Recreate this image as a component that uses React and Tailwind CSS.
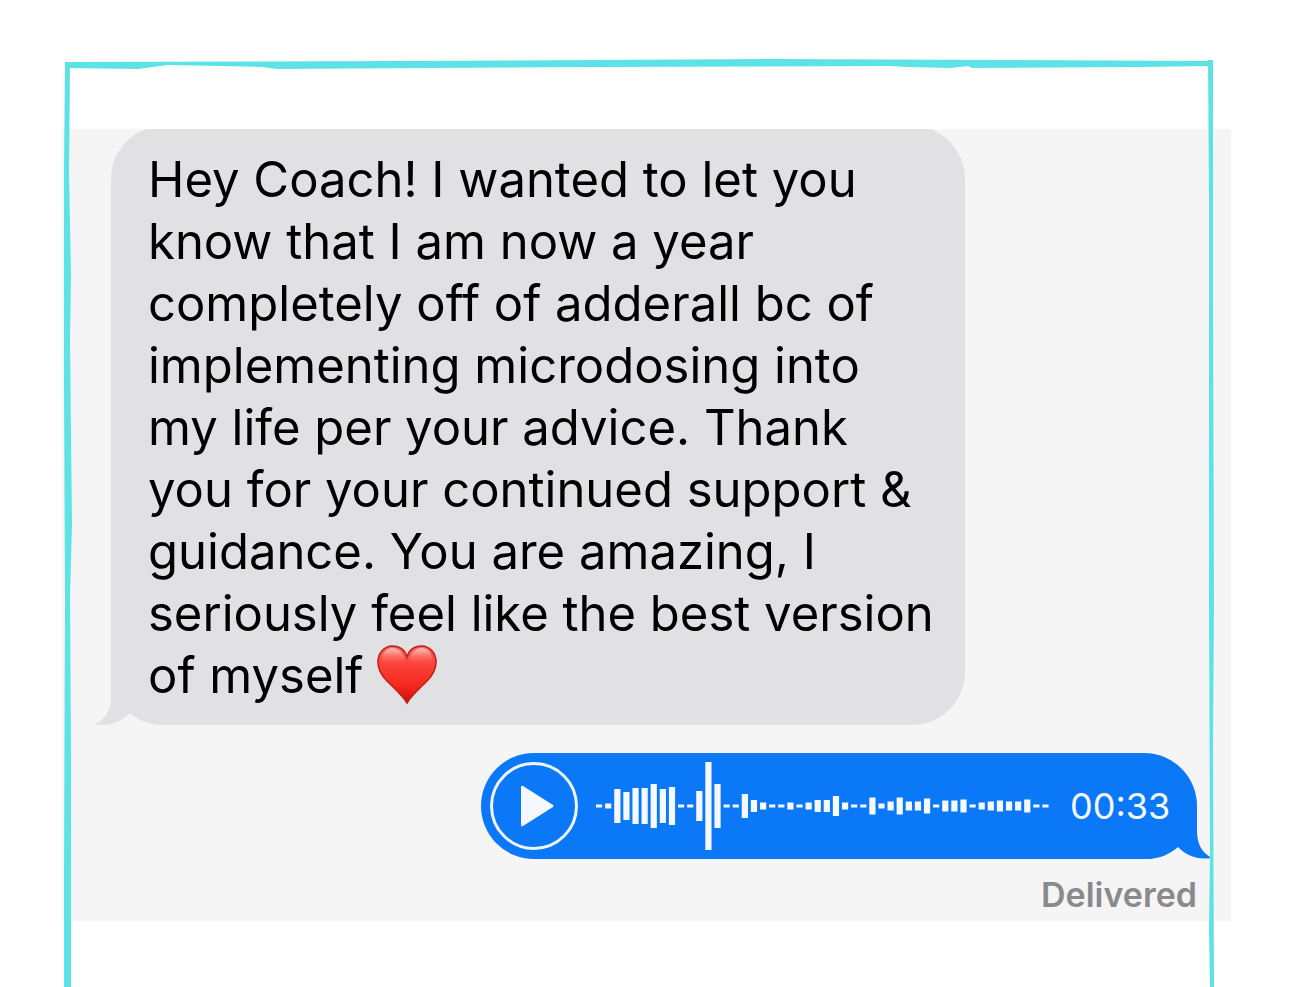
const messageLines = [
  'Hey Coach! I wanted to let you',
  'know that I am now a year',
  'completely off of adderall bc of',
  'implementing microdosing into',
  'my life per your advice. Thank',
  'you for your continued support &',
  'guidance. You are amazing, I',
  'seriously feel like the best version',
];

const waveBars = [
  3, 5, 34, 28, 36, 36, 44, 34, 38, 3, 3, 30, 88, 44, 3, 3, 24, 12, 7, 3, 3, 7, 3, 7, 12,
  12, 20, 7, 3, 3, 17, 5, 9, 17, 9, 9, 15, 3, 11, 11, 13, 3, 7, 9, 11, 9, 9, 13, 3, 3,
];

function Heart() {
  return (
    <svg
      role="img"
      aria-label="Red heart"
      viewBox="0 0 60 62"
      className="inline-block h-[62px] w-[60px] align-middle"
    >
      <defs>
        <linearGradient id="heart-fill" x1="0" y1="0" x2="0" y2="1">
          <stop offset="0" stopColor="#f8655c" />
          <stop offset="0.35" stopColor="#fb4137" />
          <stop offset="0.7" stopColor="#f6281c" />
          <stop offset="1" stopColor="#c90f08" />
        </linearGradient>
        <linearGradient id="heart-shine" x1="0" y1="0" x2="0" y2="1">
          <stop offset="0" stopColor="#ffd9d4" stopOpacity="0.85" />
          <stop offset="1" stopColor="#ff6a60" stopOpacity="0" />
        </linearGradient>
      </defs>
      <path
        d="M30 58C26 51 18 44 10 36C4 30 1 24 1 17C1 7.500 7.500 1 15.500 1C22.500 1 28 5 30 12C32 5 37.500 1 44.500 1C52.500 1 59 7.500 59 17C59 24 56 30 50 36C42 44 34 51 30 58Z"
        fill="url(#heart-fill)"
        stroke="#c0211a"
        strokeWidth="1.6"
      />
      <path d="M5 15C5 7 10 3 15.500 3C21 3 26 7 28 15C22 19 12 20 5 15Z" fill="url(#heart-shine)" />
      <path d="M55 15C55 7 50 3 44.500 3C39 3 34 7 32 15C38 19 48 20 55 15Z" fill="url(#heart-shine)" />
    </svg>
  );
}

function Waveform() {
  return (
    <svg viewBox="0 0 453 88" aria-hidden="true" className="h-[88px] w-[453px] shrink-0" fill="#f5f8fd">
      {waveBars.map((height, index) => (
        <rect key={index} x={index * 9.11} y={44 - height / 2} width="6.2" height={height} />
      ))}
    </svg>
  );
}

function BrushFrame() {
  return (
    <svg
      viewBox="0 0 1294 987"
      preserveAspectRatio="none"
      aria-hidden="true"
      className="pointer-events-none absolute inset-0 h-full w-full"
      fill="#5de2e5"
    >
      <path d="M65 62L400 61L780 59L1000 60L1213 61V66L1140 67L972 68L968 66L950 68L908 67L890 66L600 67L277 69L262 67L168 65L138 69L65 68Z" />
      <path d="M65 62H70L69 170L71 275L70 340L72 525L70 595L71 750L71 940L71 987H64L64 880L65 600L64 380L64 170Z" />
      <path d="M1208 60H1213L1213 300L1214 600L1213 750L1214 987H1210L1209 930L1210 850L1209 600L1209 200Z" />
    </svg>
  );
}

function ReceivedMessage() {
  return (
    <div className="relative -mt-[3px] ml-[49px] w-[854px] pb-[18px] pl-[37px] pt-[23px]">
      <div className="absolute inset-0 rounded-[53px] bg-[#e1e1e3]" />
      <svg
        viewBox="0 0 72 80"
        aria-hidden="true"
        className="absolute -left-[17px] bottom-0 h-20 w-[72px]"
        fill="#e1e1e3"
      >
        <path d="M17 0V52C17 65 11 76 0 79C13 82 26 78 36 68C45 76 56 80 72 80V0Z" />
      </svg>
      <p className="relative whitespace-nowrap text-[49px] leading-[62px] text-black">
        {messageLines.map((line) => (
          <span key={line} className="block">
            {line}
          </span>
        ))}
        <span className="flex items-center gap-3.5">
          of myself <Heart />
        </span>
      </p>
    </div>
  );
}

function VoiceMessage() {
  return (
    <div className="relative flex h-[106px] w-[716px] items-center self-end pl-[9px]">
      <div className="absolute inset-0 rounded-[53px] bg-[#0b78f8]" />
      <svg
        viewBox="0 0 66 60"
        aria-hidden="true"
        className="absolute -right-[15px] bottom-0 h-[60px] w-[66px]"
        fill="#0b78f8"
      >
        <path d="M0 7V60C14 60 24 55 32 48C41 57 51 61 66 59C56 54 51 45 51 32V7Z" />
      </svg>
      <div className="relative flex items-center">
        <button
          type="button"
          aria-label="Play voice message"
          className="flex size-[88px] shrink-0 items-center justify-center rounded-full border-[3px] border-[#f0f6fe]"
        >
          <svg viewBox="0 0 34 42" className="ml-1.5 h-[42px] w-[34px]" fill="#f5f8fd" aria-hidden="true">
            <path d="M1 2Q1 0 3 1L33 20Q34 21 33 22L3 41Q1 42 1 40Z" />
          </svg>
        </button>
        <div className="ml-[18px]">
          <Waveform />
        </div>
        <time dateTime="PT33S" className="ml-[21px] text-[36px] leading-none text-[#f5f8fd]">
          00:33
        </time>
      </div>
    </div>
  );
}

function App() {
  return (
    <main className="relative min-h-screen overflow-hidden bg-white pt-[129px] font-['Inter',sans-serif]">
      <section className="ml-[62px] mr-[63px] flex flex-col overflow-hidden bg-[#f5f5f5] pb-1.5 pr-[34px]">
        <ReceivedMessage />
        <div className="mt-7 flex flex-col">
          <VoiceMessage />
          <p className="mt-4 self-end text-[34px] font-semibold leading-10 text-[#8a8a8e]">Delivered</p>
        </div>
      </section>
      <BrushFrame />
    </main>
  );
}

export default App;
